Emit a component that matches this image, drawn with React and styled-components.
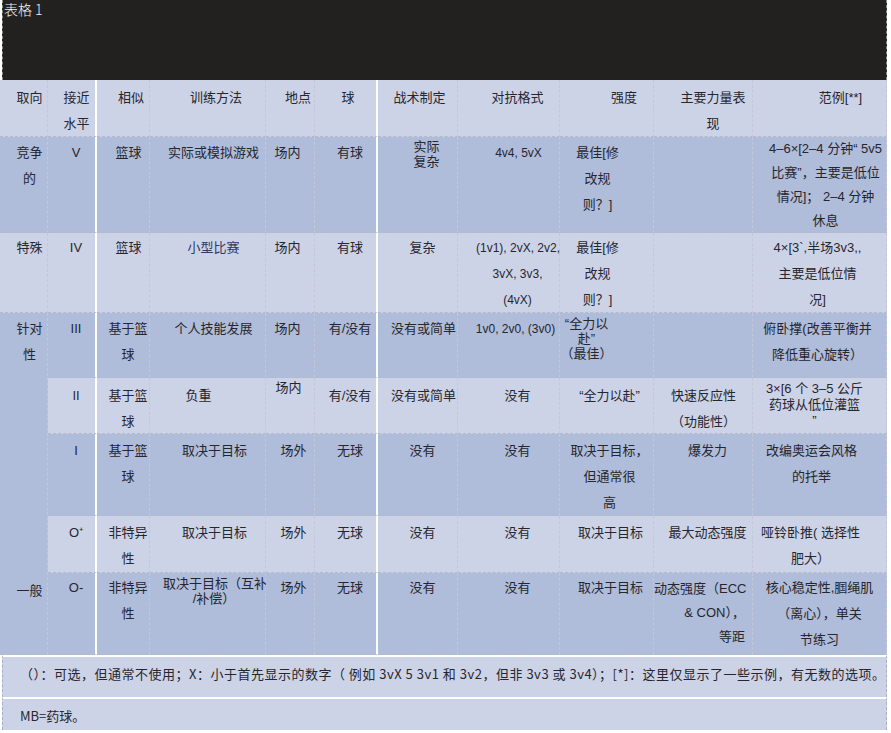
import React, { Fragment } from "react";
import styled, { createGlobalStyle } from "styled-components";

const GlobalStyle = createGlobalStyle`
  html, body {
    margin: 0;
    padding: 0;
    background: #ffffff;
  }
  body {
    font-family: "Liberation Sans", "Noto Sans CJK SC", sans-serif;
  }
`;

// column widths, measured off the sheet
const COLS = [48, 49, 53, 116, 49, 63, 80, 102, 94, 99, 134];
const LEFTS = COLS.reduce((acc, w, i) => [...acc, acc[i] + w], [0]);
const WALLS = [1, 5]; // solid white rules after these columns
const ROWS_H = [80, 57, 96, 80, 65, 56, 82, 57, 82, 42, 33];

const Sheet = styled.div`
  display: grid;
  grid-template-columns: ${COLS.map((w) => `${w}px`).join(" ")};
  grid-template-rows: ${ROWS_H.map((h) => `${h}px`).join(" ")};
  width: ${LEFTS[LEFTS.length - 1]}px;
  font-size: 13px;
`;

const Caption = styled.div`
  grid-column: 1 / -1;
  box-sizing: border-box;
  background: #222120;
  border-left: 1px dashed #8a8a8a;
  border-right: 1px dashed #8a8a8a;
  margin-left: 2px;
  color: #f2f2f2;
  font-family: "Noto Sans CJK SC", sans-serif;
  font-size: 14px;
  font-weight: 300;
  line-height: 16px;
  padding: 1px 0 0 1px;
`;

const Cell = styled.div`
  box-sizing: border-box;
  min-width: 0;
  background: ${({ $tone }) => ($tone === "dark" ? "#afbcda" : "#cdd3e7")};
  border-right: ${({ $wall }) =>
    $wall ? "2px solid #ffffff" : "1px dashed #c3c7d6"};
  border-bottom: 1px dashed #b5bacb;
  padding: ${({ $top, $pr, $pl }) => `${$top}px ${$pr}px 0 ${$pl}px`};
  font-size: ${({ $size }) => $size}px;
  line-height: ${({ $lh }) => $lh}px;
  text-align: ${({ $align }) => $align};
  white-space: nowrap;
  color: ${({ $ink }) => $ink};
`;

const TrackCell = styled(Cell)`
  grid-row: span 5;
  display: flex;
  flex-direction: column;
  padding-bottom: 50px;
`;

const Tail = styled.div`
  margin-top: auto;
`;

const Footer = styled.div`
  grid-column: 1 / -1;
  box-sizing: border-box;
  background: #cdd3e7;
  border-top: 2px solid #ffffff;
  border-left: 1px dashed #a9aebf;
  border-right: 1px dashed #a9aebf;
  margin-left: 2px;
  padding: ${({ $top }) => $top}px 0 0 ${({ $left }) => $left}px;
  line-height: 18px;
  font-family: "Noto Sans CJK SC", sans-serif;
  font-size: 13px;
  letter-spacing: ${({ $spacing }) => $spacing}px;
  white-space: pre;
  color: #26262e;
`;

const c = (t, x, o = {}) => ({ t, x, ...o });

const HEAD = {
  tone: "light",
  top: 5,
  from: 0,
  cells: [
    c("取向", 30),
    c("接近\n水平", 77.5),
    c("相似", 131.5),
    c("训练方法", 216.5),
    c("地点", 298.5),
    c("球", 349),
    c("战术制定", 420),
    c("对抗格式", 518),
    c("强度", 624.5),
    c("主要力量表\n现", 713.5),
    c("范例[**]", 841),
  ],
};

const ROWS = [
  {
    tone: "dark",
    top: 3,
    from: 0,
    cells: [
      c("竞争\n的", 30),
      c("V", 77),
      c("篮球", 129),
      c("实际或模拟游戏", 214),
      c("场内", 288),
      c("有球", 351),
      c("实际\n复杂", 427, { lh: 15, top: 2 }),
      c("4v4, 5vX", 519, { size: 12 }),
      c("最佳[修\n改规\n则？]", 598),
      c("", 0),
      c("4–6×[2–4 分钟“ 5v5\n比赛”，主要是低位\n情况]； 2–4 分钟\n休息", 826, {
        lh: 24,
        top: 0,
      }),
    ],
  },
  {
    tone: "light",
    top: 2,
    from: 0,
    cells: [
      c("特殊", 30),
      c("IV", 77),
      c("篮球", 129),
      c("小型比赛", 214, { ink: "#2c3866" }),
      c("场内", 288),
      c("有球", 351),
      c("复杂", 423),
      c("(1v1), 2vX, 2v2,\n3vX, 3v3,\n(4vX)", 518, { size: 12 }),
      c("最佳[修\n改规\n则？]", 598),
      c("", 0),
      c("4×[3`,半场3v3,,\n主要是低位情\n况]", 818),
    ],
  },
  {
    tone: "dark",
    top: 3,
    from: 0,
    track: { t: "针对\n性", tail: "一般", x: 30 },
    cells: [
      c("III", 77),
      c("基于篮\n球", 128.5),
      c("个人技能发展", 214),
      c("场内", 288),
      c("有/没有", 351),
      c("没有或简单", 424),
      c("1v0, 2v0, (3v0)", 516, { size: 12 }),
      c("“全力以\n赴”\n（最佳）", 587, { lh: 15, top: 3 }),
      c("", 0),
      c("俯卧撑(改善平衡并\n降低重心旋转）", 818),
    ],
  },
  {
    tone: "light",
    top: 5,
    from: 1,
    cells: [
      c("II", 77),
      c("基于篮\n球", 128.5),
      c("负重", 199),
      c("场内", 289, { lh: 20, top: 0 }),
      c("有/没有", 351),
      c("没有或简单", 424),
      c("没有", 518),
      c("“全力以赴”", 610),
      c("快速反应性\n（功能性）", 704),
      c("3×[6 个 3–5 公斤\n药球从低位灌篮\n”", 815, { lh: 16, top: 3 }),
    ],
  },
  {
    tone: "dark",
    top: 4,
    from: 1,
    cells: [
      c("I", 77),
      c("基于篮\n球", 128.5),
      c("取决于目标", 215),
      c("场外", 294),
      c("无球", 351),
      c("没有", 423),
      c("没有", 518),
      c("取决于目标，\n但通常很\n高", 610),
      c("爆发力", 708),
      c("改编奥运会风格\n的托举", 812),
    ],
  },
  {
    tone: "light",
    top: 4,
    from: 1,
    cells: [
      c("O⁺", 77),
      c("非特异\n性", 128.5),
      c("取决于目标", 215),
      c("场外", 294),
      c("无球", 351),
      c("没有", 423),
      c("没有", 518),
      c("取决于目标", 611),
      c("最大动态强度", 708),
      c("哑铃卧推( 选择性\n肥大）", 811),
    ],
  },
  {
    tone: "dark",
    top: 2,
    from: 1,
    cells: [
      c("O-", 77),
      c("非特异\n性", 128.5),
      c("取决于目标（互补\n/补偿）", 214.5, { lh: 15, top: 3 }),
      c("场外", 294),
      c("无球", 351),
      c("没有", 423),
      c("没有", 518),
      c("取决于目标", 611),
      c("动态强度（ECC\n& CON），\n等距", 0, {
        align: "right",
        pr: 7,
        lh: 24,
        top: 4,
      }),
      c("核心稳定性,腘绳肌\n（离心），单关\n节练习", 820),
    ],
  },
];

function Lines({ text }) {
  return text.split("\n").map((line, i) => (
    <Fragment key={i}>
      {i > 0 && <br />}
      {line}
    </Fragment>
  ));
}

// turn a target text centre into left/right padding for a column
function placement(cell, col) {
  if (cell.align === "right") return { $pl: 0, $pr: cell.pr, $align: "right" };
  const mid = LEFTS[col] + COLS[col] / 2;
  const shift = cell.t ? cell.x - mid : 0;
  return {
    $pl: shift > 0 ? shift * 2 : 0,
    $pr: shift < 0 ? -shift * 2 : 0,
    $align: "center",
  };
}

function SheetRow({ row, name }) {
  const out = [];
  if (row.track) {
    out.push(
      <TrackCell
        key={`${name}-track`}
        $tone="dark"
        $top={row.top}
        $lh={26}
        $size={13}
        $ink="#26262e"
        {...placement(row.track, 0)}
      >
        <div>
          <Lines text={row.track.t} />
        </div>
        <Tail>{row.track.tail}</Tail>
      </TrackCell>
    );
  }
  row.cells.forEach((cell, i) => {
    const col = row.from + (row.track ? 1 : 0) + i;
    out.push(
      <Cell
        key={`${name}-${col}`}
        $tone={row.tone}
        $wall={WALLS.includes(col)}
        $top={cell.top ?? row.top}
        $lh={cell.lh ?? 26}
        $size={cell.size ?? 13}
        $ink={cell.ink ?? "#26262e"}
        {...placement(cell, col)}
      >
        <Lines text={cell.t} />
      </Cell>
    );
  });
  return out;
}

export default function App() {
  return (
    <>
      <GlobalStyle />
      <Sheet>
        <Caption>表格 1</Caption>
        <SheetRow row={HEAD} name="head" />
        {ROWS.map((row, i) => (
          <SheetRow key={i} row={row} name={`r${i}`} />
        ))}
        <Footer $top={8} $left={17} $spacing={0.5}>
          {"（）：可选，但通常不使用；X：小于首先显示的数字（ 例如 3vX 5 3v1 和 3v2，但非 3v3 或 3v4）；[*]：这里仅显示了一些示例，有无数的选项。"}
        </Footer>
        <Footer $top={8} $left={17} $spacing={0}>
          MB=药球。
        </Footer>
      </Sheet>
    </>
  );
}
